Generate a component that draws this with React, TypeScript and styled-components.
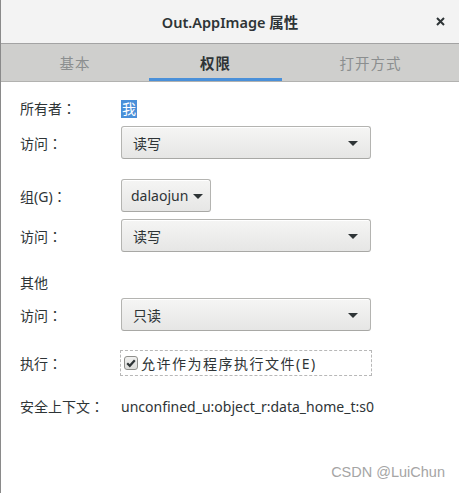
import React from "react";
import styled, { createGlobalStyle } from "styled-components";

const Global = createGlobalStyle`
  html, body { margin: 0; padding: 0; background: #ffffff; }
  body { font-family: "Noto Sans", "Noto Sans CJK SC", sans-serif; }
`;

const Window = styled.div`
  position: relative;
  width: 459px;
  height: 493px;
  box-sizing: border-box;
  border-left: 1px solid #8a8a8a;
  background: #ffffff;
  display: flex;
  flex-direction: column;
  color: #2e3436;
  font-family: "Noto Sans", "Noto Sans CJK SC", sans-serif;
  overflow: hidden;
`;

const TitleBar = styled.div`
  height: 43px;
  flex: none;
  background: #f3f3f3;
  border-bottom: 1px solid #a3a3a3;
  display: flex;
  align-items: center;
  justify-content: center;
  position: relative;
`;

const Title = styled.div`
  font-size: 14.5px;
  font-weight: 600;
  color: #2e3436;
`;

const Close = styled.div`
  position: absolute;
  right: 12px;
  top: 14px;
  width: 14px;
  height: 14px;
  display: flex;
  align-items: center;
  justify-content: center;
`;

const Tabs = styled.div`
  height: 37px;
  flex: none;
  background: #cfcfcd;
  border-bottom: 1px solid #b2b2b0;
  display: flex;
`;

const Tab = styled.div<{ $w?: number; $active?: boolean }>`
  ${(p) => (p.$w ? `width: ${p.$w}px; flex: none;` : "flex: 1;")}
  display: flex;
  align-items: center;
  justify-content: center;
  box-sizing: border-box;
  font-size: 14.5px;
  font-weight: ${(p) => (p.$active ? 700 : 400)};
  color: ${(p) => (p.$active ? "#2e3436" : "#8b8e8f")};
  border-bottom: 3px solid ${(p) => (p.$active ? "#4a90d9" : "transparent")};
  padding-top: 3px;
  letter-spacing: 1px;
`;

const Content = styled.div`
  display: flex;
  flex-direction: column;
  padding-left: 19px;
`;

const Row = styled.div<{ $mt: number; $h: number }>`
  margin-top: ${(p) => p.$mt}px;
  height: ${(p) => p.$h}px;
  display: grid;
  grid-template-columns: 101px auto;
  align-items: center;
`;

const Label = styled.div`
  font-size: 14px;
  color: #2e3436;
  white-space: nowrap;
`;

const Colon = styled.span`
  font-family: "Noto Sans CJK TC", sans-serif;
`;

const Value = styled.div`
  font-size: 14px;
  color: #2e3436;
  white-space: nowrap;
`;

const Selected = styled.span`
  background: #4a90d9;
  color: #ffffff;
  padding: 0 1px;
  line-height: 18px;
  display: inline-block;
`;

const Combo = styled.div<{ $w: number }>`
  width: ${(p) => p.$w}px;
  height: 33px;
  box-sizing: border-box;
  border: 1px solid #b4b4b1;
  border-bottom-color: #a8a8a5;
  border-radius: 3px;
  background: linear-gradient(#f5f5f4, #e6e6e5);
  display: flex;
  align-items: center;
  justify-content: space-between;
  padding: 0 12px 0 11px;
  font-size: 14px;
  color: #2e3436;
  box-shadow: inset 0 1px 0 #ffffff;
`;

const ButtonCombo = styled(Combo)`
  justify-content: flex-start;
  gap: 5px;
  padding: 0 9px 0 9px;
`;

const Arrow = styled.span`
  width: 0;
  height: 0;
  border-left: 5px solid transparent;
  border-right: 5px solid transparent;
  border-top: 5px solid #2e3436;
  margin-top: 1px;
`;

const CheckArea = styled.div`
  width: 252px;
  height: 26px;
  box-sizing: border-box;
  border: 1px dashed #b8b8b8;
  display: flex;
  align-items: center;
  padding-left: 3px;
  gap: 3px;
  margin-left: -1px;
  font-size: 14px;
  color: #2e3436;
`;

const CheckText = styled.span`
  letter-spacing: 1.5px;
`;

const CheckBox = styled.span`
  width: 14px;
  height: 14px;
  box-sizing: border-box;
  border: 1px solid #8f8f8c;
  border-radius: 3px;
  background: linear-gradient(#f0f0ef, #dcdcda);
  display: flex;
  align-items: center;
  justify-content: center;
`;

const Watermark = styled.div`
  position: absolute;
  right: 14px;
  bottom: 13px;
  font-family: "Liberation Sans", Arial, sans-serif;
  font-size: 14.5px;
  color: #a5a5a5;
`;

const L = ({ text, colon = true }: { text: string; colon?: boolean }) => (
  <Label>
    {text}
    {colon && <Colon>：</Colon>}
  </Label>
);

export default function App() {
  return (
    <>
      <Global />
      <Window>
        <TitleBar>
          <Title>Out.AppImage 属性</Title>
          <Close>
            <svg width="9" height="9" viewBox="0 0 9 9">
              <path d="M1 1 L8 8 M8 1 L1 8" stroke="#2e3436" strokeWidth="2" />
            </svg>
          </Close>
        </TitleBar>
        <Tabs>
          <Tab $w={148}>基本</Tab>
          <Tab $w={133} $active>
            权限
          </Tab>
          <Tab>打开方式</Tab>
        </Tabs>
        <Content>
          <Row $mt={16} $h={18}>
            <L text="所有者" />
            <Value>
              <Selected>我</Selected>
            </Value>
          </Row>
          <Row $mt={10} $h={33}>
            <L text="访问" />
            <Combo $w={250}>
              <span>读写</span>
              <Arrow />
            </Combo>
          </Row>
          <Row $mt={20} $h={33}>
            <L text="组(G)" />
            <ButtonCombo $w={90}>
              <span>dalaojun</span>
              <Arrow />
            </ButtonCombo>
          </Row>
          <Row $mt={7} $h={33}>
            <L text="访问" />
            <Combo $w={250}>
              <span>读写</span>
              <Arrow />
            </Combo>
          </Row>
          <Row $mt={20} $h={18}>
            <L text="其他" colon={false} />
          </Row>
          <Row $mt={8} $h={33}>
            <L text="访问" />
            <Combo $w={250}>
              <span>只读</span>
              <Arrow />
            </Combo>
          </Row>
          <Row $mt={19} $h={26}>
            <L text="执行" />
            <CheckArea>
              <CheckBox>
                <svg width="12" height="12" viewBox="0 0 12 12">
                  <path
                    d="M2.2 6.2 L4.8 8.8 L9.8 3.2"
                    stroke="#2e3436"
                    strokeWidth="2.2"
                    fill="none"
                  />
                </svg>
              </CheckBox>
              <CheckText>允许作为程序执行文件(E)</CheckText>
            </CheckArea>
          </Row>
          <Row $mt={20} $h={18}>
            <L text="安全上下文" />
            <Value>unconfined_u:object_r:data_home_t:s0</Value>
          </Row>
        </Content>
        <Watermark>CSDN @LuiChun</Watermark>
      </Window>
    </>
  );
}
